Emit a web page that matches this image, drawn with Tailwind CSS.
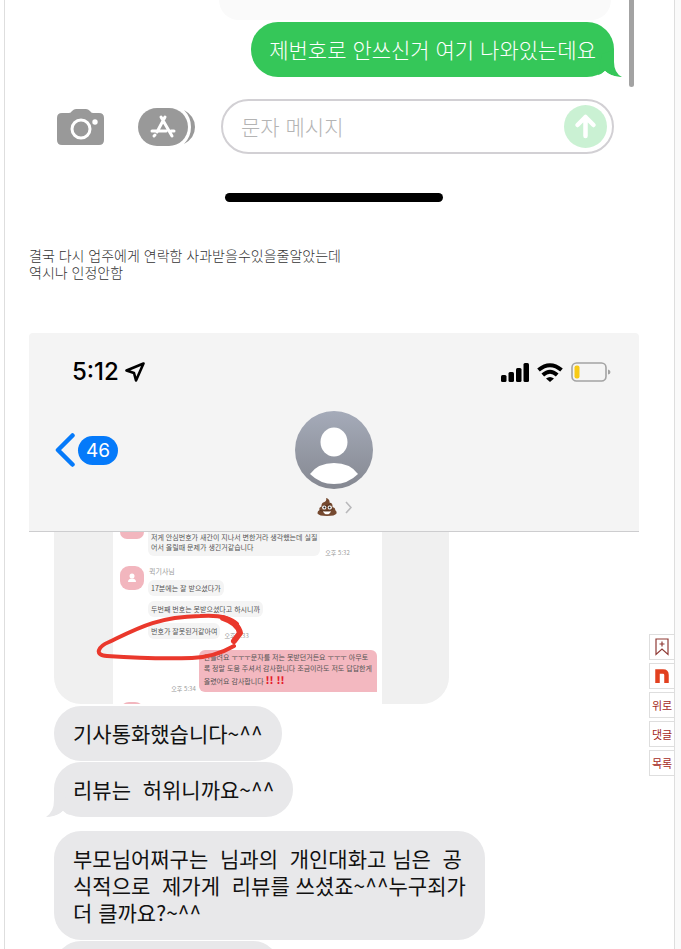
<!DOCTYPE html>
<html lang="ko">
<head>
<meta charset="utf-8">
<meta name="viewport" content="width=device-width, initial-scale=1">
<title>게시글</title>
<script src="https://cdn.jsdelivr.net/npm/@tailwindcss/browser@4"></script>
</head>
<body class="relative h-screen overflow-hidden bg-[#fafafa] pr-[6px] font-['Noto_Sans_CJK_KR',sans-serif]">
<main class="min-h-full border-l-4 border-white bg-white">
<article class="min-h-screen border-x border-[#dedede] px-6">

  <!-- first message screen -->
  <section class="relative flex w-full max-w-[610px] flex-col pr-[25px]">
    <div class="mr-[3px] h-5 w-[392px] self-end rounded-b-[20px] bg-[#fafafa]"></div>
    <div class="relative mt-[2px] self-end rounded-[27px] bg-[#35c759] px-[18px] py-[14px] text-[21px] leading-[27px] font-light text-white">제번호로 안쓰신거 여기 나와있는데요
      <svg class="absolute -right-[8px] bottom-0" width="28" height="27" viewBox="0 0 28 27" aria-hidden="true"><path d="M4 25Q8 24 11 21Q17 27 28 27Q20 23 20 12L20 0L8 4Z" fill="#35c759"/><path d="M0 27Q6 26 11 21Q16 26 26 27Z" fill="#fff"/></svg>
    </div>
    <div class="absolute right-[5px] top-0 h-[87px] w-[5px] rounded-b-full bg-[#a3a3a3]"></div>
    <form class="mt-[22px] flex items-center pl-7">
      <button type="button" aria-label="카메라" class="mr-[33px]">
        <svg class="block" width="48" height="38" viewBox="0 0 48 38"><path d="M5 5H12Q14 5 15 3Q17 1 19 1H29Q31 1 33 3Q34 5 36 5H42Q47 5 47 10V32Q47 37 42 37H5Q0 37 0 32V10Q0 5 5 5Z" fill="#999"/><circle cx="24" cy="21" r="9" fill="none" stroke="#fff" stroke-width="3"/><circle cx="38" cy="14" r="2.7" fill="#fff"/></svg>
      </button>
      <button type="button" aria-label="앱" class="mr-[26px]">
        <svg class="block" width="57" height="38" viewBox="0 0 57 38"><rect x="0" y="0" width="50" height="38" rx="19" fill="#999"/><path d="M46 2Q57 8 57 19T46 36Q53 29 53 19T46 2Z" fill="#999"/><g stroke="#fff" stroke-width="3" stroke-linecap="round" fill="none"><path d="M23 9L34 28M27 9L19 24M14 23H28M33 23H36M17 27L16 28"/></g></svg>
      </button>
      <div class="flex h-[55px] min-w-0 flex-1 items-center rounded-full border-2 border-[#d2d0d4] pr-[5px] pl-[18px]">
        <input aria-label="문자 메시지" placeholder="문자 메시지" class="min-w-0 flex-1 bg-transparent text-[21px] leading-[27px] font-light outline-none placeholder:text-[#b4b4b4]">
        <button type="button" aria-label="보내기">
          <svg class="block" width="43" height="43" viewBox="0 0 43 43"><circle cx="21.5" cy="21.5" r="21.5" fill="#caf1d3"/><path d="M21.500 31V12M13.500 20L21.500 12L29.500 20" fill="none" stroke="#fff" stroke-width="4.500" stroke-linecap="round" stroke-linejoin="round"/></svg>
        </button>
      </div>
    </form>
    <div class="mt-[39px] mr-[171px] h-[9px] w-[218px] self-end rounded-full bg-black"></div>
  </section>

  <p class="mt-[45px] text-[14px] leading-[17px] font-light text-[#333]">결국 다시 업주에게 연락함 사과받을수있을줄알았는데<br>역시나 인정안함</p>

  <!-- second message screen -->
  <section class="mt-[52px] w-full max-w-[610px]">
    <header class="flex h-[199px] flex-col rounded-t-sm border-b border-[#cdcdcf] bg-[#f4f4f4]">
      <div class="flex items-center justify-between pt-6 pr-7 pl-[43px]">
        <div class="flex items-center gap-[6px] font-['Inter','Liberation_Sans',sans-serif] text-[24px] leading-[30px] font-medium text-black">5:12
          <svg width="20" height="20" viewBox="0 0 20 20" aria-hidden="true"><path d="M18.500 1.500L1.500 8.500L9 11L11 18.500Z" fill="none" stroke="#000" stroke-width="2.600" stroke-linejoin="round"/></svg>
        </div>
        <div class="flex items-center gap-2">
          <svg width="28" height="19" viewBox="0 0 28 19" aria-hidden="true"><rect y="12" width="5.500" height="7" rx="1.500"/><rect x="7.500" y="9" width="5.500" height="10" rx="1.500"/><rect x="15" y="5" width="5.500" height="14" rx="1.500"/><rect x="22.500" y="0" width="5.500" height="19" rx="1.500"/></svg>
          <svg width="26" height="19" viewBox="0 0 26 19" aria-hidden="true"><g fill="none" stroke="#000" stroke-width="4"><path d="M1.500 7Q13 -2.500 24.500 7"/><path d="M5.800 12Q13 5.500 20.200 12"/></g><path d="M9 15.500Q13 12.500 17 15.500L13 19Z"/></svg>
          <svg width="40" height="20" viewBox="0 0 40 20" aria-hidden="true"><rect x="1" y="1" width="34" height="18" rx="4.500" fill="none" stroke="#a3a3a3" stroke-width="1.600"/><rect x="3.500" y="3.500" width="5" height="13" rx="2" fill="#f8ca15"/><path d="M37 7.500Q39.500 8 39.500 10T37 12.500Z" fill="#a3a3a3"/></svg>
        </div>
      </div>
      <div class="mt-6 grid grid-cols-[1fr_78px_1fr] items-center">
        <a href="#" aria-label="뒤로, 46" class="flex items-center gap-[3px] pl-[26px]">
          <svg width="20" height="34" viewBox="0 0 20 34" aria-hidden="true"><path d="M17.500 2.500L3 17L17.500 31.500" fill="none" stroke="#057afa" stroke-width="4.500" stroke-linecap="round" stroke-linejoin="round"/></svg>
          <span class="rounded-full bg-[#057afa] px-2 font-['Inter','Liberation_Sans',sans-serif] text-[19px] leading-[29px] text-white">46</span>
        </a>
        <svg width="78" height="78" viewBox="0 0 78 78" role="img" aria-label="프로필"><defs><linearGradient id="av" x2="0" y2="1"><stop stop-color="#a5abb9"/><stop offset="1" stop-color="#858891"/></linearGradient></defs><circle cx="39" cy="39" r="39" fill="url(#av)"/><ellipse cx="39" cy="31" rx="13.500" ry="14.500" fill="#fff"/><path d="M15 63Q23 52 39 52T63 63Q53 73 39 73T15 63Z" fill="#fff"/></svg>
      </div>
      <a href="#" aria-label="연락처" class="mt-2 flex items-center justify-center gap-2">
        <svg width="20" height="20" viewBox="0 0 20 20" aria-hidden="true"><path d="M9 1Q13 2 12.500 5.500Q16 6 15.500 10Q19 11 18 13Q20 14 19.500 16.500Q18 19 10 19T.5 16.500Q.3 14 2.500 13Q1.500 10.500 4.500 9.500Q4 6 7.500 5Q10 4 9 1Z" fill="#75492f"/><path d="M5 9.500Q11 9 14 6.500M3 13.500Q8 15 16 12" fill="none" stroke="#563420"/><circle cx="7.200" cy="10.500" r="2.100" fill="#fff"/><circle cx="12.800" cy="10.500" r="2.100" fill="#fff"/><circle cx="7.400" cy="10.600" r="1" fill="#222"/><circle cx="12.600" cy="10.600" r="1" fill="#222"/><path d="M6 14.200Q10 15 14 14.200Q13 17.300 10 17.300T6 14.200Z" fill="#fff"/></svg>
        <svg width="7" height="13" viewBox="0 0 7 13" aria-hidden="true"><path d="M1 1L6 6.500L1 12" fill="none" stroke="#b9b9bb" stroke-width="1.600"/></svg>
      </a>
    </header>

    <div class="flex flex-col items-start pl-[25px]">
      <!-- shared chat capture -->
      <div class="relative h-[172px] w-[395px] overflow-hidden rounded-b-[27px] bg-[#f0f0f0] pr-[67px] pl-[59px]">
        <div class="flex h-full flex-col bg-white text-[7px] leading-[10px] text-[#555]">
          <div class="flex items-end gap-[5px] pl-[7px]">
            <div class="h-[7px] w-6 self-start rounded-b-[9px] bg-[#f2b6be]"></div>
            <p class="-ml-px rounded-b-md bg-[#f4f4f4] px-[3px] pb-[4px]">저게 안심번호가 새간이 지나서 변한거라 생각했는데 실질<br>어서 올릴때 문제가 생긴거같습니다</p>
            <time class="whitespace-nowrap text-[6px] leading-[7px] text-[#999]">오후 5:32</time>
          </div>
          <div class="mt-[10px] flex items-start gap-1 pl-[7px]">
            <svg width="24" height="24" viewBox="0 0 24 24" aria-hidden="true"><rect width="24" height="24" rx="9" fill="#f2b6be"/><circle cx="12" cy="10" r="2.500" fill="#fff"/><path d="M8 16Q8 12.500 12 12.500T16 16Z" fill="#fff"/></svg>
            <div class="flex flex-col items-start">
              <span class="pl-px text-[#999]">퀵기사님</span>
              <p class="mt-1 rounded-md bg-[#f4f4f4] px-[3px] py-[3px]">17분에는 잘 받으셨다가</p>
              <p class="mt-[5px] rounded-md bg-[#f4f4f4] px-[3px] py-[3px]">두번째 번호는 못받으셨다고 하시니까</p>
              <div class="mt-[6px] flex items-end gap-1">
                <p class="rounded-md bg-[#f4f4f4] px-[3px] py-[3px]">번호가 잘못된거같아여</p>
                <time class="text-[6px] leading-[7px] text-[#999]">오후 5:33</time>
              </div>
            </div>
          </div>
          <div class="mt-[11px] flex items-end justify-end gap-[3px] pr-[5px]">
            <time class="text-[6px] leading-[7px] text-[#999]">오후 5:34</time>
            <p class="relative rounded-md rounded-br-none bg-[#f3b8c0] px-[5px] pt-[2px] pb-[5px] leading-[11px] whitespace-nowrap">안들려요 ㅜㅜㅜ문자를 저는 못받던거든요 ㅜㅜㅜ 아무토<br>록 정말 도움 주셔서 감사합니다 조금이라도 저도 답답한게<br>올렸어요 감사합니다 <b class="text-[10px] font-black text-[#e41d2b]">!! !!</b></p>
          </div>
          <div class="mt-[10px] flex gap-1 pl-[7px]"><div class="h-6 w-6 shrink-0 rounded-[9px] bg-[#f2b6be]"></div><span class="pl-px text-[#999]">퀵기사님</span></div>
        </div>
        <svg class="absolute top-20 left-[42px]" width="152" height="50" viewBox="0 0 152 50" aria-hidden="true"><g fill="none" stroke="#ea382c" stroke-linecap="round" stroke-linejoin="round"><path d="M138 34Q119 45 96 46C65 47 40 46 11 44C-3 43 3 34 13 30C42 16 61 5 104 4Q131 2 141 12" stroke-width="4"/><path d="M127 6Q142 11 144 21L138 29" stroke-width="6"/></g></svg>
      </div>

      <p class="mt-[2px] rounded-[27px] bg-[#e8e8ea] px-[19px] py-[14px] text-[21px] leading-[27px] whitespace-pre text-[#111]">기사통화했습니다~^^</p>
      <p class="relative mt-px rounded-[27px] bg-[#e8e8ea] px-[19px] py-[14px] text-[21px] leading-[27px] whitespace-pre text-[#111]">리뷰는  허위니까요~^^<svg class="absolute bottom-0 -left-[8px]" width="28" height="27" viewBox="0 0 28 27" aria-hidden="true"><path d="M24 25Q20 24 17 21Q11 27 0 27Q8 22 8 10V0L19 4Z" fill="#e8e8ea"/><path d="M3 27Q12 26 17 21Q20 25 28 27Z" fill="#fff"/></svg></p>
      <p class="mt-[14px] rounded-[27px] bg-[#e8e8ea] px-[19px] py-[14px] text-[21px] leading-[27px] whitespace-pre text-[#111]">부모님어쩌구는  님과의  개인대화고 님은  공
식적으로  제가게  리뷰를 쓰셨죠~^^누구죄가
더 클까요?~^^</p>
      <div class="mt-px h-[55px] w-[226px] rounded-[27px] bg-[#e8e8ea]"></div>
    </div>
  </section>
</article>
</main>

<nav aria-label="바로가기" class="absolute top-[634px] right-[6px] flex flex-col gap-[3px] text-[11px] leading-none text-[#a52a1c]">
  <button type="button" aria-label="스크랩" class="grid h-[26px] w-[26px] place-items-center border border-[#dedede] bg-white"><svg width="14" height="18" viewBox="0 0 14 18"><path d="M1 1H13V16.500L7 11L1 16.500ZM7 3.500V8.500M4.500 6H9.500" fill="none" stroke="#8f3a35" stroke-width="1.200"/></svg></button>
  <button type="button" aria-label="n" class="grid h-[26px] w-[26px] place-items-center border border-[#dedede] bg-white"><svg width="14" height="14" viewBox="0 0 14 14"><path d="M2.500 14V2.500H8Q11.500 2.500 11.500 6V14" fill="none" stroke="#e2401f" stroke-width="4.500"/></svg></button>
  <a href="#" class="grid h-[26px] w-[26px] place-items-center border border-[#dedede] bg-white">위로</a>
  <a href="#" class="grid h-[26px] w-[26px] place-items-center border border-[#dedede] bg-white">댓글</a>
  <a href="#" class="grid h-[26px] w-[26px] place-items-center border border-[#dedede] bg-white">목록</a>
</nav>
</body>
</html>
